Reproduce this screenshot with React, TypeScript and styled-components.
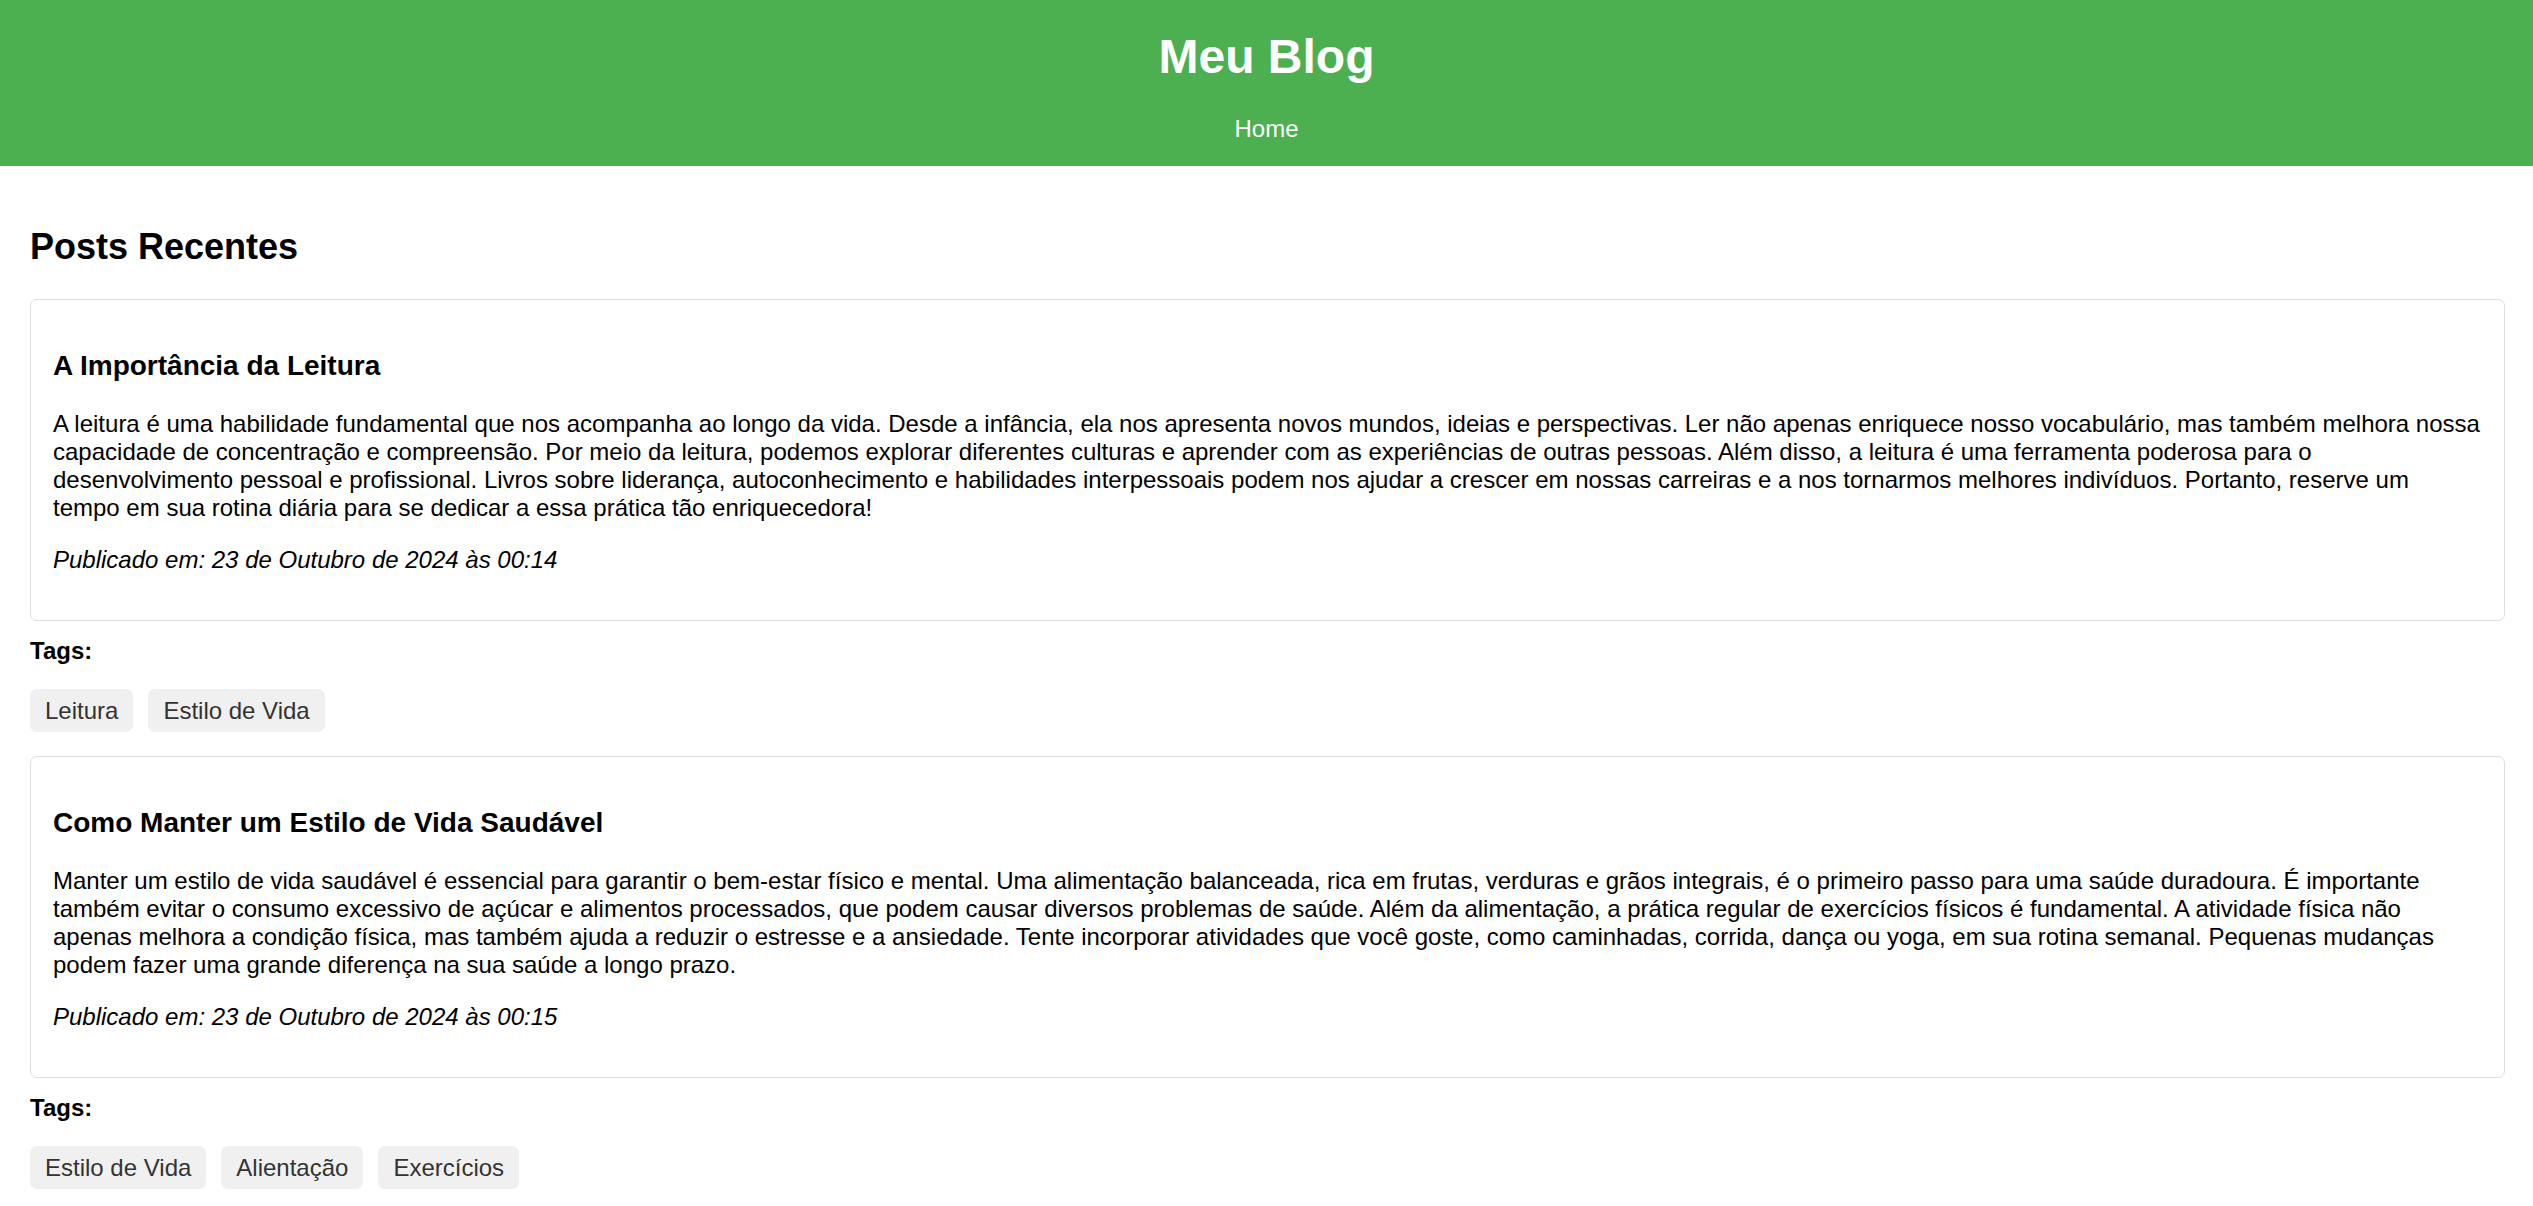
import * as React from "react"
import styled, { createGlobalStyle } from "styled-components"

type Post = {
  title: string
  body: string
  date: string
  tags: string[]
}

const posts: Post[] = [
  {
    title: "A Importância da Leitura",
    body:
      "A leitura é uma habilidade fundamental que nos acompanha ao longo da vida. Desde a infância, ela nos apresenta novos mundos, ideias e perspectivas. Ler não apenas enriquece nosso vocabulário, mas também melhora nossa capacidade de concentração e compreensão. Por meio da leitura, podemos explorar diferentes culturas e aprender com as experiências de outras pessoas. Além disso, a leitura é uma ferramenta poderosa para o desenvolvimento pessoal e profissional. Livros sobre liderança, autoconhecimento e habilidades interpessoais podem nos ajudar a crescer em nossas carreiras e a nos tornarmos melhores indivíduos. Portanto, reserve um tempo em sua rotina diária para se dedicar a essa prática tão enriquecedora!",
    date: "23 de Outubro de 2024 às 00:14",
    tags: ["Leitura", "Estilo de Vida"],
  },
  {
    title: "Como Manter um Estilo de Vida Saudável",
    body:
      "Manter um estilo de vida saudável é essencial para garantir o bem-estar físico e mental. Uma alimentação balanceada, rica em frutas, verduras e grãos integrais, é o primeiro passo para uma saúde duradoura. É importante também evitar o consumo excessivo de açúcar e alimentos processados, que podem causar diversos problemas de saúde. Além da alimentação, a prática regular de exercícios físicos é fundamental. A atividade física não apenas melhora a condição física, mas também ajuda a reduzir o estresse e a ansiedade. Tente incorporar atividades que você goste, como caminhadas, corrida, dança ou yoga, em sua rotina semanal. Pequenas mudanças podem fazer uma grande diferença na sua saúde a longo prazo.",
    date: "23 de Outubro de 2024 às 00:15",
    tags: ["Estilo de Vida", "Alientação", "Exercícios"],
  },
]

const GlobalStyle = createGlobalStyle`
  body {
    margin: 0;
    background: #ffffff;
    color: #000000;
    font-family: "Liberation Sans", Arial, sans-serif;
    font-size: 24px;
  }
`

const Header = styled.header`
  background: #4caf50;
  color: #ffffff;
  text-align: center;
  padding: 29px 0 23px;
`

const SiteTitle = styled.h1`
  margin: 0;
  font-size: 48px;
  font-weight: 700;
`

const Nav = styled.nav`
  margin-top: 31px;
`

const NavLink = styled.a`
  color: #ffffff;
  text-decoration: none;
  font-size: 24px;
`

const Main = styled.main`
  padding: 30px 28px 30px 30px;
`

const SectionTitle = styled.h2`
  font-size: 36px;
  margin: 30px 0 31px;
`

const Card = styled.article`
  border: 1px solid #dedede;
  border-radius: 7px;
  padding: 22px;
  margin-bottom: 16px;
`

const PostTitle = styled.h3`
  font-size: 28px;
  margin: 28px 0;
`

const PostBody = styled.p`
  margin: 24px 0;
`

const PostDate = styled.p`
  margin: 24px 0;
  font-style: italic;
`

const TagsLabel = styled.strong`
  display: block;
  font-weight: 700;
`

const TagList = styled.div`
  display: flex;
  flex-wrap: wrap;
  gap: 15px;
  margin: 24px 0;
`

const Tag = styled.span`
  display: inline-block;
  background: #f0f0f0;
  color: #333333;
  border-radius: 7px;
  padding: 7.5px 15px;
  line-height: 28px;
`

const PostEntry: React.FC<{ post: Post }> = ({ post }) => (
  <>
    <Card>
      <PostTitle>{post.title}</PostTitle>
      <PostBody>{post.body}</PostBody>
      <PostDate>Publicado em: {post.date}</PostDate>
    </Card>
    <TagsLabel>Tags:</TagsLabel>
    <TagList>
      {post.tags.map(tag => (
        <Tag key={tag}>{tag}</Tag>
      ))}
    </TagList>
  </>
)

export default function App() {
  return (
    <>
      <GlobalStyle />
      <Header>
        <SiteTitle>Meu Blog</SiteTitle>
        <Nav>
          <NavLink href="#">Home</NavLink>
        </Nav>
      </Header>
      <Main>
        <SectionTitle>Posts Recentes</SectionTitle>
        {posts.map(post => (
          <PostEntry key={post.title} post={post} />
        ))}
      </Main>
    </>
  )
}
